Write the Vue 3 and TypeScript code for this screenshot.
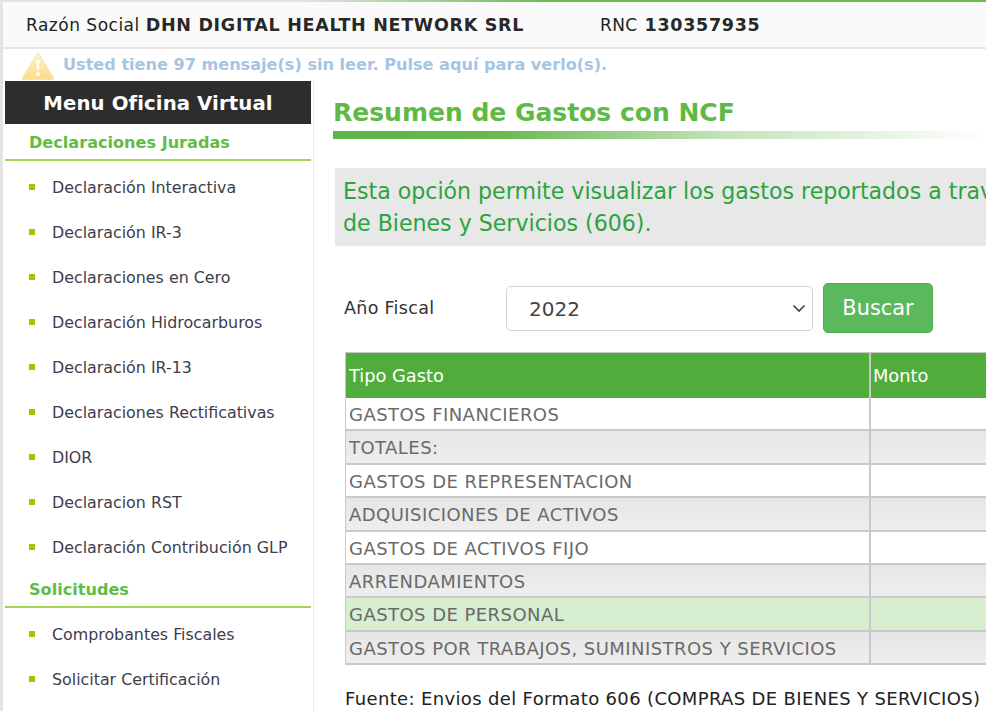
<script setup lang="ts">
const groups: { title: string; items: string[] }[] = [
  {
    title: 'Declaraciones Juradas',
    items: ['Declaración Interactiva', 'Declaración IR-3', 'Declaraciones en Cero', 'Declaración Hidrocarburos', 'Declaración IR-13', 'Declaraciones Rectificativas', 'DIOR', 'Declaracion RST', 'Declaración Contribución GLP'],
  },
  { title: 'Solicitudes', items: ['Comprobantes Fiscales', 'Solicitar Certificación'] },
]
const rows: { name: string; cls: string }[] = [
  { name: 'GASTOS FINANCIEROS', cls: '' },
  { name: 'TOTALES:', cls: 'alt' },
  { name: 'GASTOS DE REPRESENTACION', cls: '' },
  { name: 'ADQUISICIONES DE ACTIVOS', cls: 'alt' },
  { name: 'GASTOS DE ACTIVOS FIJO', cls: '' },
  { name: 'ARRENDAMIENTOS', cls: 'alt' },
  { name: 'GASTOS DE PERSONAL', cls: 'hl' },
  { name: 'GASTOS POR TRABAJOS, SUMINISTROS Y SERVICIOS', cls: 'alt' },
]
</script>

<template>
  <div class="page">
    <div class="topline"></div>
    <header class="bar">
      <span class="rs">Razón Social <b>DHN DIGITAL HEALTH NETWORK SRL</b></span>
      <span class="rnc"><span class="rnc-l">RNC</span> <b>130357935</b></span>
    </header>
    <div class="notice">
      <svg class="warn" width="34" height="30" viewBox="0 0 34 30">
        <defs>
          <linearGradient id="w" x1="0" y1="0" x2="0" y2="1">
            <stop offset="0" stop-color="#fff4cc" />
            <stop offset="1" stop-color="#fcdc88" />
          </linearGradient>
        </defs>
        <path d="M17 1.5 L32.5 27 Q33 28.5 31 28.5 H3 Q1 28.5 1.5 27 Z" fill="url(#w)" stroke="#f6e3b0" stroke-width="1" stroke-linejoin="round" />
        <path d="M15.4 9 H18.6 L17.8 19 H16.2 Z" fill="#fff" />
        <circle cx="17" cy="23" r="1.9" fill="#fff" />
      </svg>
      <span class="msg">Usted tiene 97 mensaje(s) sin leer. Pulse aquí para verlo(s).</span>
    </div>
    <div class="main">
      <aside class="side">
        <div class="side-head">Menu Oficina Virtual</div>
        <section v-for="g in groups" :key="g.title">
          <h3 class="g-title">{{ g.title }}</h3>
          <ul class="g-list">
            <li v-for="i in g.items" :key="i">{{ i }}</li>
          </ul>
        </section>
      </aside>
      <main class="content">
        <h1 class="title">Resumen de Gastos con NCF</h1>
        <div class="rule"></div>
        <p class="info">Esta opción permite visualizar los gastos reportados a través<br />de Bienes y Servicios (606).</p>
        <div class="form">
          <label class="lbl">Año Fiscal</label>
          <div class="sel">
            <span>2022</span>
            <svg width="14" height="9" viewBox="0 0 14 9"><path d="M1.5 1.5 L7 7 L12.5 1.5" fill="none" stroke="#444" stroke-width="1.7" /></svg>
          </div>
          <button class="btn">Buscar</button>
        </div>
        <div class="table">
          <div class="row head">
            <div class="c1">Tipo Gasto</div>
            <div class="c2">Monto</div>
          </div>
          <div v-for="r in rows" :key="r.name" class="row" :class="r.cls">
            <div class="c1">{{ r.name }}</div>
            <div class="c2"></div>
          </div>
        </div>
        <p class="src">Fuente: Envios del Formato 606 (COMPRAS DE BIENES Y SERVICIOS)</p>
      </main>
    </div>
  </div>
</template>

<style>
html, body { margin: 0; overflow: hidden; background: #fff; }
</style>

<style scoped>
.page {
  width: 986px;
  height: 711px;
  overflow: hidden;
  font-family: "DejaVu Sans", Verdana, sans-serif;
  background: #fff;
  border-left: 3px solid #e4e4e4;
  box-sizing: border-box;
}
.topline {
  height: 2px;
  background: linear-gradient(90deg, #e4e4e4 0%, #e4e4e4 30%, #6cbb55 55%, #6cbb55 100%);
}
.bar {
  width: 1000px;
  height: 47px;
  background: #fafafa;
  border-bottom: 2px solid #e6e6e6;
  display: flex;
  align-items: center;
  padding-left: 23px;
  padding-top: 1px;
  box-sizing: border-box;
  font-size: 17px;
  letter-spacing: 0.5px;
  color: #222;
}
.bar b { color: #282828; font-size: 17.5px; letter-spacing: 0.7px; }
.rnc { margin-left: 76px; }
.rnc-l { letter-spacing: 0.4px; margin-right: 1px; }
.notice {
  height: 32px;
  display: flex;
  align-items: center;
  padding-left: 18px;
}
.warn { flex: none; margin-top: 2px; }
.msg {
  margin-left: 8px;
  margin-top: -2px;
  font-size: 16.1px;
  font-weight: 700;
  color: #a5c5e3;
}
.main { display: flex; align-items: flex-start; }
.side {
  width: 306px;
  margin-left: 2px;
  margin-right: 2px;
  flex: none;
}
.side-head {
  height: 43px;
  background: #2d2d2d;
  color: #fff;
  font-size: 19.7px;
  font-weight: 700;
  text-align: center;
  line-height: 45px;
  letter-spacing: 0.1px;
}
.g-title {
  margin: 0;
  height: 35px;
  line-height: 38px;
  padding-left: 24px;
  font-size: 16.1px;
  font-weight: 700;
  color: #62bb46;
  border-bottom: 2px solid #a3d455;
}
.g-list { list-style: none; margin: 0; padding: 4px 0 1px 0; }
.g-list li {
  height: 45px;
  line-height: 45px;
  font-size: 15.85px;
  color: #3d3d4a;
  padding-left: 47px;
  position: relative;
}
.g-list li::before {
  content: "";
  position: absolute;
  left: 24px;
  top: 19px;
  width: 6px;
  height: 6px;
  background: #a4c400;
}
.content {
  flex: none;
  width: 660px;
  border-left: 1px solid #ececec;
  margin-top: -1px;
  padding-left: 20px;
  padding-top: 1px;
  height: 640px;
  box-sizing: content-box;
}
.title {
  margin: 0 0 0 -1px;
  height: 44px;
  line-height: 63px;
  font-size: 25px;
  font-weight: 700;
  color: #5fb946;
  white-space: nowrap;
}
.rule {
  margin: 6px 0 0 -1px;
  height: 8px;
  width: 652px;
  background: linear-gradient(90deg, #5cb443 0%, #68b950 25%, #c4e3bb 60%, #ffffff 100%);
}
.info {
  margin: 29px 0 0 1px;
  width: 700px;
  height: 78px;
  background: #e8e8e8;
  color: #2ba43e;
  font-size: 22.1px;
  line-height: 32px;
  padding: 7px 0 0 8px;
  box-sizing: border-box;
  white-space: nowrap;
}
.form {
  display: flex;
  align-items: center;
  margin-top: 37px;
  padding-left: 10px;
  height: 50px;
}
.lbl { width: 162px; font-size: 17.5px; letter-spacing: 0.3px; color: #333; flex: none; margin-top: -1px; }
.sel {
  width: 307px;
  height: 45px;
  flex: none;
  border: 1px solid #d4d4d4;
  border-radius: 5px;
  box-sizing: border-box;
  display: flex;
  align-items: center;
  justify-content: space-between;
  padding: 0 6px 0 22px;
  font-size: 20px;
  color: #444;
  margin-top: 1px;
}
.btn {
  margin-left: 10px;
  width: 110px;
  height: 50px;
  border: 1px solid #4cae4c;
  border-radius: 5px;
  background: #5cb85c;
  color: #fff;
  font-family: inherit;
  font-size: 20.9px;
  padding: 0;
}
.table {
  margin-top: 19px;
  margin-left: 11px;
  width: 700px;
  border-left: 1px solid #c9c9c9;
  border-top: 1px solid #c9c9c9;
}
.row {
  display: flex;
  height: 33.4px;
  border-bottom: 2px solid #c9c9c9;
  box-sizing: border-box;
  font-size: 18px;
  letter-spacing: 0.45px;
  line-height: 33px;
  color: #6a6a6a;
  background: #fff;
}
.row.head {
  height: 45px;
  line-height: 45px;
  background: #50ad3c;
  color: #fff;
  font-size: 17.8px;
  letter-spacing: 0;
  border-bottom: none;
}
.row.alt { background: linear-gradient(#e6e6e6, #eeeeee); }
.row.hl { background: #d7eed0; }
.c1 {
  width: 525px;
  flex: none;
  padding-left: 3px;
  box-sizing: border-box;
  border-right: 2px solid #c9c9c9;
  white-space: nowrap;
}
.c2 { padding-left: 2px; flex: 1; }
.src {
  margin: 23px 0 0 11px;
  font-size: 18px;
  letter-spacing: 0.35px;
  color: #222;
  white-space: nowrap;
}
</style>
